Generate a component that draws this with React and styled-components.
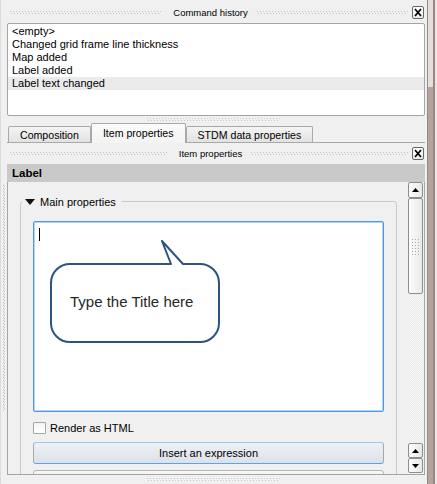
import React from 'react';
import styled, { createGlobalStyle, css } from 'styled-components';

const GlobalStyle = createGlobalStyle`
  html, body { margin: 0; padding: 0; }
  body {
    background: #f0f0f0;
    font-family: "Liberation Sans", Arial, sans-serif;
    font-size: 11px;
    color: #000;
    overflow: hidden;
  }
`;

const Page = styled.div`
  display: flex;
  width: 437px;
  height: 484px;
  overflow: hidden;
`;

const LeftGutter = styled.div`
  flex: none;
  width: 7px;
  box-sizing: border-box;
  border-left: 1px solid #dcdcdc;
  padding: 185px 0 0 2px;
`;

const VGrip = styled.div`
  width: 2px;
  height: 226px;
  background:
    linear-gradient(#c2c2c2 1px, transparent 1px) 0 0 / 1px 3px repeat-y,
    linear-gradient(#c2c2c2 1px, transparent 1px) 1px 1px / 1px 3px repeat-y;
`;

const Main = styled.div`
  flex: none;
  width: 418px;
  display: flex;
  flex-direction: column;
`;

const TitleBar = styled.div`
  display: flex;
  align-items: center;
  box-sizing: border-box;
  height: ${p => p.$h}px;
  padding: ${p => p.$top || 0}px 1px 0 3px;
`;

const GripDots = styled.div`
  flex: 1;
  height: 3px;
  background:
    linear-gradient(90deg, #c4c4c4 1px, transparent 1px) 0 0 / 3px 1px repeat-x,
    linear-gradient(90deg, #c4c4c4 1px, transparent 1px) 1px 2px / 3px 1px repeat-x;
`;

const TitleText = styled.span`
  font-size: 9.5px;
  padding: 0 9px 0 12px;
  white-space: nowrap;
`;

const CloseBox = styled.div`
  flex: none;
  width: 12px;
  height: 13px;
  box-sizing: border-box;
  margin-left: 4px;
  border: 1px solid #666;
  border-radius: 2px;
  background: linear-gradient(#ffffff, #ebebeb);
  display: flex;
  align-items: center;
  justify-content: center;
`;

const ListBox = styled.div`
  height: 93px;
  box-sizing: border-box;
  border: 1px solid #a5a5a5;
  border-radius: 2px;
  background: #fff;
  padding-top: 1px;
`;

const ListItem = styled.div`
  height: 13px;
  line-height: 13px;
  padding-left: 4px;
  white-space: nowrap;
  background: ${p => (p.$current ? '#ebebeb' : 'transparent')};
`;

const Splitter = styled.div`
  height: ${p => p.$h}px;
  display: flex;
  align-items: center;
  justify-content: center;
  padding-right: 5px;
`;

const SplitDots = styled.div`
  width: 133px;
  height: 3px;
  background:
    linear-gradient(90deg, #c8c8c8 1px, transparent 1px) 0 0 / 3px 1px repeat-x,
    linear-gradient(90deg, #c8c8c8 1px, transparent 1px) 1px 2px / 3px 1px repeat-x;
`;

const TabBar = styled.div`
  height: 20px;
  box-sizing: border-box;
  display: flex;
  align-items: flex-end;
  padding-left: 1px;
  border-bottom: 1px solid #a9a9a9;
`;

const Tab = styled.div`
  box-sizing: border-box;
  height: 16px;
  padding: 0 11px;
  display: flex;
  align-items: center;
  white-space: nowrap;
  font-size: 10.6px;
  border: 1px solid #a9a9a9;
  border-bottom: none;
  border-radius: 2px 2px 0 0;
  background: linear-gradient(#f4f4f4, #e2e2e2);
  ${p =>
    p.$active &&
    css`
      height: 20px;
      margin-bottom: -1px;
      background: linear-gradient(#fbfbfb, #f3f3f3);
      padding-bottom: 1px;
    `}
`;

const SectionHeader = styled.div`
  margin-top: 1px;
  height: 18px;
  line-height: 18px;
  padding-left: 5px;
  background: #c9c9c9;
  font-weight: bold;
  font-size: 11.5px;
`;

const ScrollArea = styled.div`
  height: 293px;
  box-sizing: border-box;
  border: 1px solid #a5a5a5;
  border-top: none;
  display: flex;
  overflow: hidden;
`;

const ScrollContent = styled.div`
  flex: 1;
  overflow: hidden;
  padding: 13px 11px 0 12px;
`;

const GroupBox = styled.fieldset`
  margin: 0;
  padding: 0 12px 20px;
  min-width: 0;
  border: 1px solid #cacaca;
  border-radius: 3px;
`;

const GroupTitle = styled.legend`
  margin-left: -11px;
  padding: 0 6px 0 3px;
  line-height: 13px;
`;

const TitleInner = styled.span`
  display: inline-flex;
  align-items: center;
  gap: 5px;
`;

const TextEdit = styled.div`
  position: relative;
  height: 191px;
  box-sizing: border-box;
  margin-top: 12px;
  border: 1px solid #4f98e4;
  border-radius: 2px;
  box-shadow: inset 0 0 0 1px #b3d3f5;
  background: #fff;
`;

const Caret = styled.div`
  width: 1px;
  height: 13px;
  margin: 6px 0 0 5px;
  background: #000;
`;

const Bubble = styled.div`
  position: absolute;
  left: 16px;
  top: 18px;
  width: 172px;
  height: 104px;

  svg {
    position: absolute;
    inset: 0;
  }
`;

const BubbleText = styled.div`
  position: relative;
  padding: 53px 0 0 20px;
  font-size: 15px;
  line-height: 18px;
  color: #262626;
  white-space: nowrap;
`;

const CheckRow = styled.div`
  margin-top: 10px;
  height: 12px;
  display: flex;
  align-items: center;
  gap: 4px;
`;

const CheckBox = styled.div`
  width: 13px;
  height: 12px;
  box-sizing: border-box;
  border: 1px solid #a6a6a6;
  border-radius: 1px;
  background: linear-gradient(#f4f4f4, #ffffff);
`;

const PushButton = styled.div`
  height: 22px;
  box-sizing: border-box;
  margin-top: ${p => p.$gap}px;
  display: flex;
  align-items: center;
  justify-content: center;
  border: 1px solid #a8a8a8;
  border-top-color: #9cc6ee;
  border-bottom-color: #5fa2e8;
  border-radius: 3px;
  background: linear-gradient(#eef1f6, #dce1e9);
  ${p =>
    p.$plain &&
    css`
      border-color: #b4b4b4;
      background: linear-gradient(#f7f7f7, #e6e6e6);
    `}
`;

const VScrollBar = styled.div`
  flex: none;
  width: 15px;
  margin: 0 1px 1px 0;
  display: flex;
  flex-direction: column;
`;

const ScrollButton = styled.div`
  flex: none;
  height: ${p => p.$h || 16}px;
  box-sizing: border-box;
  border: 1px solid #8e8e8e;
  border-radius: 2px;
  background: linear-gradient(90deg, #fdfdfd, #e8e8e8);
  display: flex;
  align-items: center;
  justify-content: center;
`;

const ThumbGrip = styled.div`
  width: 9px;
  height: 17px;
  background-image: radial-gradient(#a9a9a9 0.7px, transparent 0.9px);
  background-size: 3px 3px;
`;

const Track = styled.div`
  flex: 1;
  background: repeating-conic-gradient(#e9e9e9 0 25%, #f7f7f7 0 50%) 0 0 / 2px 2px;
`;

const RightStrip = styled.div`
  flex: none;
  width: 12px;
  display: flex;
  padding-left: 2px;
  box-sizing: border-box;
`;

const OuterTrack = styled.div`
  width: 6px;
  box-sizing: border-box;
  border-left: 1px solid #8d8d8d;
  display: flex;
  flex-direction: column;
`;

const OuterTrackTop = styled.div`
  height: 87px;
  background: #e7dedb;
`;

const OuterTrackRest = styled.div`
  flex: 1;
  background: #b8a39c;
`;

const OuterEdge = styled.div`
  width: 2px;
  background: #9c8780;
`;

const OuterMargin = styled.div`
  flex: 1;
  background: #e8e8e8;
`;

function CloseIcon() {
  return (
    <CloseBox>
      <svg width="8" height="9" viewBox="0 0 8 9">
        <path d="M1 1 L7 8 M7 1 L1 8" stroke="#000" strokeWidth="1.7" fill="none" />
      </svg>
    </CloseBox>
  );
}

function Arrow({ down }) {
  return (
    <svg width="7" height="4" viewBox="0 0 7 4">
      <path d={down ? 'M0 0 H7 L3.5 4 Z' : 'M0 4 H7 L3.5 0 Z'} fill="#000" />
    </svg>
  );
}

function DockTitle({ title, h, top }) {
  return (
    <TitleBar $h={h} $top={top}>
      <GripDots />
      <TitleText>{title}</TitleText>
      <GripDots />
      <CloseIcon />
    </TitleBar>
  );
}

const history = [
  '<empty>',
  'Changed grid frame line thickness',
  'Map added',
  'Label added',
  'Label text changed',
];

export default function App() {
  return (
    <Page>
      <GlobalStyle />
      <LeftGutter>
        <VGrip />
      </LeftGutter>
      <Main>
        <DockTitle title="Command history" h={23} top={1} />
        <ListBox>
          {history.map((item, i) => (
            <ListItem key={item} $current={i === history.length - 1}>
              {item}
            </ListItem>
          ))}
        </ListBox>
        <Splitter $h={7}>
          <SplitDots />
        </Splitter>
        <TabBar>
          <Tab>Composition</Tab>
          <Tab $active>Item properties</Tab>
          <Tab>STDM data properties</Tab>
        </TabBar>
        <DockTitle title="Item properties" h={20} />
        <SectionHeader>Label</SectionHeader>
        <ScrollArea>
          <ScrollContent>
            <GroupBox>
              <GroupTitle>
                <TitleInner>
                  <svg width="10" height="6" viewBox="0 0 10 6">
                    <path d="M0 0 H10 L5 6 Z" fill="#111" />
                  </svg>
                  Main properties
                </TitleInner>
              </GroupTitle>
              <TextEdit>
                <Caret />
                <Bubble>
                  <svg width="172" height="104" viewBox="0 0 172 104">
                    <path
                      d="M121 24 L112 1 L133 24 H150 A19 19 0 0 1 169 43 V83 A19 19 0 0 1 150 102 H20 A19 19 0 0 1 1 83 V43 A19 19 0 0 1 20 24 Z"
                      fill="#fff"
                      stroke="#2d5383"
                      strokeWidth="2"
                      strokeLinejoin="round"
                    />
                  </svg>
                  <BubbleText>Type the Title here</BubbleText>
                </Bubble>
              </TextEdit>
              <CheckRow>
                <CheckBox />
                Render as HTML
              </CheckRow>
              <PushButton $gap={8}>Insert an expression</PushButton>
              <PushButton $gap={6} $plain />
            </GroupBox>
          </ScrollContent>
          <VScrollBar>
            <ScrollButton>
              <Arrow />
            </ScrollButton>
            <ScrollButton $h={96}>
              <ThumbGrip />
            </ScrollButton>
            <Track />
            <ScrollButton $h={15}>
              <Arrow />
            </ScrollButton>
            <ScrollButton $h={15}>
              <Arrow down />
            </ScrollButton>
          </VScrollBar>
        </ScrollArea>
        <Splitter $h={9}>
          <SplitDots />
        </Splitter>
      </Main>
      <RightStrip>
        <OuterTrack>
          <OuterTrackTop />
          <OuterTrackRest />
        </OuterTrack>
        <OuterEdge />
        <OuterMargin />
      </RightStrip>
    </Page>
  );
}
